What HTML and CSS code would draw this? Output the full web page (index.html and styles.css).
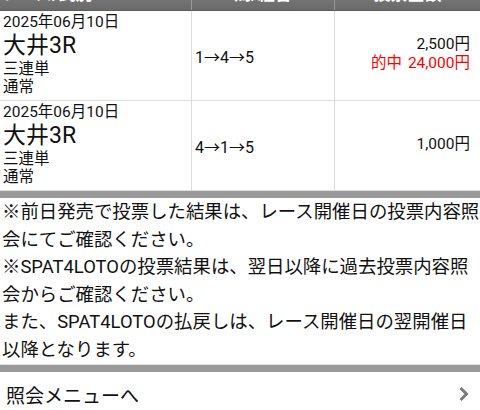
FILE: index.html
```html
<!DOCTYPE html>
<html lang="ja">
<head>
<meta charset="utf-8">
<title>投票照会</title>
<link rel="stylesheet" href="styles.css">
</head>
<body>
<div class="page">
  <table class="bets">
    <thead>
      <tr>
        <th class="c-race">レース/式別</th>
        <th class="c-combo">馬/組番</th>
        <th class="c-amount">投票金額</th>
      </tr>
    </thead>
    <tbody>
      <tr>
        <td class="c-race">
          <div class="date">2025年06月10日</div>
          <div class="race">大井3R</div>
          <div class="type">三連単</div>
          <div class="type">通常</div>
        </td>
        <td class="c-combo">1→4→5</td>
        <td class="c-amount">
          <div>2,500円</div>
          <div class="hit">的中<span class="gap"></span>24,000円</div>
        </td>
      </tr>
      <tr>
        <td class="c-race">
          <div class="date">2025年06月10日</div>
          <div class="race">大井3R</div>
          <div class="type">三連単</div>
          <div class="type">通常</div>
        </td>
        <td class="c-combo">4→1→5</td>
        <td class="c-amount">
          <div>1,000円</div>
        </td>
      </tr>
    </tbody>
  </table>
  <div class="bar"></div>
  <div class="notes">
    <p>※前日発売で投票した結果は、レース開催日の投票内容照会にてご確認ください。</p>
    <p>※SPAT4LOTOの投票結果は、翌日以降に過去投票内容照会からご確認ください。</p>
    <p>また、SPAT4LOTOの払戻しは、レース開催日の翌開催日以降となります。</p>
  </div>
  <div class="bar bar-bottom"></div>
  <a class="menu-link" href="#">
    <span>照会メニューへ</span>
    <svg class="chev" width="12" height="16" viewBox="0 0 12 16"><path d="M2.5 2 L8.5 8 L2.5 14" fill="none" stroke="#7a7a7a" stroke-width="3"/></svg>
  </a>
</div>
</body>
</html>
```

FILE: styles.css
```css
html, body {
  margin: 0;
  padding: 0;
  background: #fff;
  overflow: hidden;
}
body {
  font-family: "Roboto", "Noto Sans CJK JP", sans-serif;
  color: #111;
  width: 480px;
}
.page {
  margin-top: -25px;
}
.bets {
  width: 480px;
  border-collapse: collapse;
  table-layout: fixed;
}
.bets th {
  height: 35px;
  padding: 0 2px;
  background: linear-gradient(#8a8a8a, #6a6a6a);
  color: #fff;
  font-size: 17px;
  font-weight: bold;
  text-align: center;
  border-left: 1px solid #9a9a9a;
  border-bottom: 1px solid #5c5c5c;
}
.bets th.c-race {
  text-align: left;
  border-left: none;
}
.bets th.c-race { width: 187px; }
.bets th.c-combo { width: 138px; }
.bets td {
  border: 1px solid #dcdcdc;
  vertical-align: middle;
  padding: 1px 3px 4px;
  font-size: 16px;
}
.bets td.c-race { border-left: none; }
.bets td.c-amount {
  border-right: none;
  text-align: right;
  padding-right: 10px;
  font-size: 15.5px;
  line-height: 19px;
}
.bets td.c-combo {
  padding-top: 4px;
}
.date {
  font-size: 15.5px;
  line-height: 20px;
}
.race {
  font-size: 23px;
  line-height: 28px;
}
.type {
  font-size: 15.5px;
  line-height: 18px;
}
.hit {
  color: #ff0000;
}
.gap {
  display: inline-block;
  width: 6px;
}
.bar {
  height: 7px;
  background: #9a9a9a;
}
.bar-bottom {
  border-top: 1px solid #e0e0e0;
  margin-top: 1px;
}
.notes {
  padding: 0 0 0 2px;
  font-size: 18.4px;
  line-height: 27.5px;
}
.notes p {
  margin: 0;
}
.menu-link {
  display: flex;
  align-items: center;
  justify-content: space-between;
  height: 44px;
  padding: 0 10px 0 6px;
  color: #111;
  text-decoration: none;
  font-size: 19px;
}
.chev {
  display: block;
}
```
